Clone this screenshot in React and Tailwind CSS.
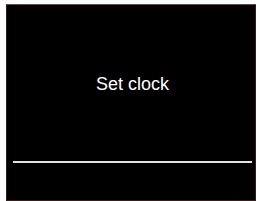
import React from "react";

export default function App() {
  return (
    <div className="w-[257px] h-[201px] bg-white pl-[6px] pt-[4px] overflow-hidden">
      <div className="w-[250px] h-[197px] bg-black border border-[#3a1c1c] border-t-[#6b4a4a] flex flex-col">
        <div className="h-[67px]" />
        <p className="text-center text-white text-[18px] leading-[24px] font-['Liberation_Sans',sans-serif] pl-[3px]">
          Set clock
        </p>
        <div className="h-[65px]" />
        <div className="ml-[6px] mr-[3px] h-[2px] bg-[#e4e4e4]" />
      </div>
    </div>
  );
}
